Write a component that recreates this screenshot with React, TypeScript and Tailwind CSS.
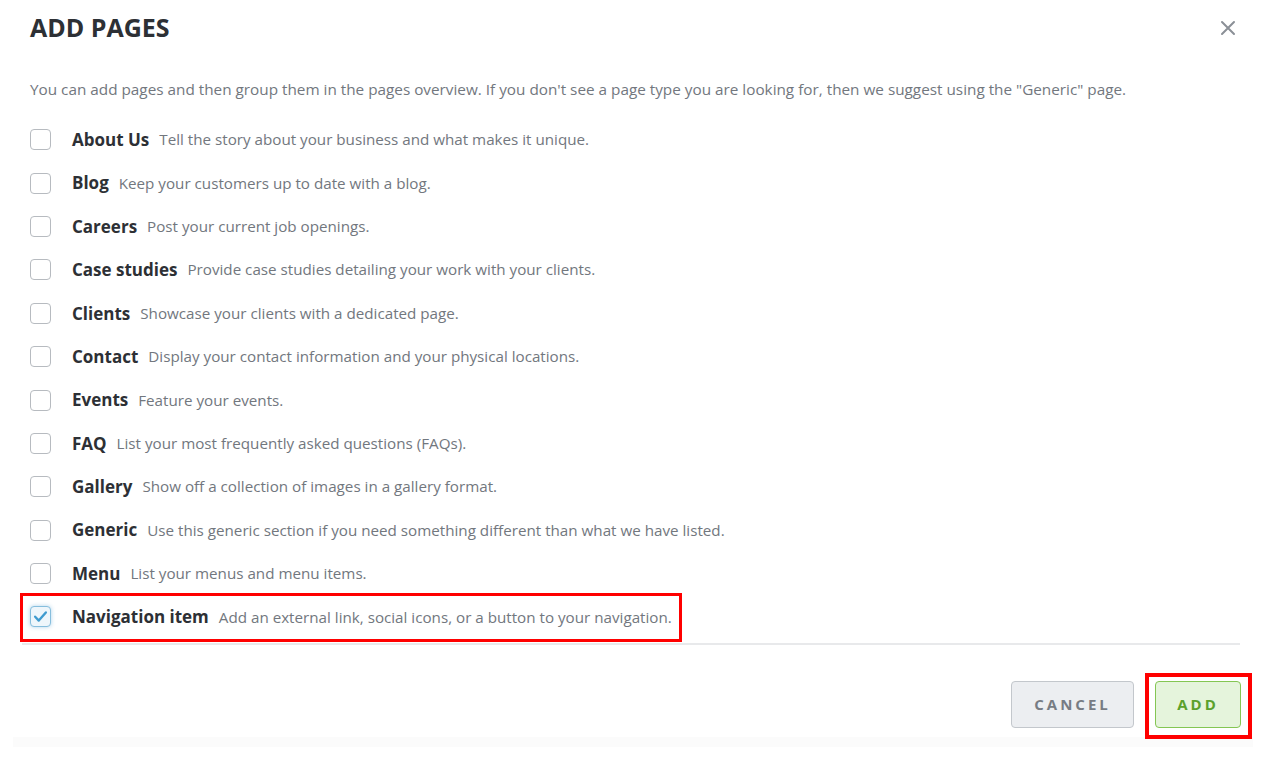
import React from "react";

const items: [string, string][] = [
  ["About Us", "Tell the story about your business and what makes it unique."],
  ["Blog", "Keep your customers up to date with a blog."],
  ["Careers", "Post your current job openings."],
  ["Case studies", "Provide case studies detailing your work with your clients."],
  ["Clients", "Showcase your clients with a dedicated page."],
  ["Contact", "Display your contact information and your physical locations."],
  ["Events", "Feature your events."],
  ["FAQ", "List your most frequently asked questions (FAQs)."],
  ["Gallery", "Show off a collection of images in a gallery format."],
  ["Generic", "Use this generic section if you need something different than what we have listed."],
  ["Menu", "List your menus and menu items."],
  ["Navigation item", "Add an external link, social icons, or a button to your navigation."],
];

export default function App() {
  return (
    <div
      className="relative w-[1288px] h-[760px] bg-white overflow-hidden"
      style={{ fontFamily: "'Open Sans', Lato, sans-serif" }}
    >
      <div className="flex items-center justify-between pl-[30px] pr-[52px] pt-[10px] h-[44px]">
        <h1 className="text-[25px] leading-[32px] font-bold text-[#2d3035]">ADD PAGES</h1>
        <svg width="16" height="16" viewBox="0 0 16 16" className="mt-[2px]">
          <path d="M2 2 L14 14 M14 2 L2 14" stroke="#8b9097" strokeWidth="2" strokeLinecap="round" />
        </svg>
      </div>
      <p className="pl-[30px] mt-[35px] text-[15.3px] leading-[20px] text-[#72777e]">
        You can add pages and then group them in the pages overview. If you don't see a page type you are looking for, then we suggest using the "Generic" page.
      </p>
      <div className="mt-[19px] pl-[30px] flex flex-col">
        {items.map(([label, desc], i) => {
          const checked = i === items.length - 1;
          return (
            <div key={label} className="flex items-center h-[43.4px]">
              {checked ? (
                <div className="w-[21px] h-[21px] rounded-[4px] border-[1.5px] border-[#86bedd] bg-[#eef6fb] shadow-[0_0_4px_rgba(80,160,210,0.45)] flex items-center justify-center">
                  <svg width="15" height="15" viewBox="0 0 14 14">
                    <path d="M2 7.2 L5.4 10.8 L12 3.2" fill="none" stroke="#3f9bcf" strokeWidth="2.2" strokeLinecap="round" strokeLinejoin="round" />
                  </svg>
                </div>
              ) : (
                <div className="w-[21px] h-[21px] rounded-[4px] border-[1.5px] border-[#b7bbc0] bg-white" />
              )}
              <span className="ml-[21px] text-[17px] font-bold text-[#2d3035]">{label}</span>
              <span className="ml-[10px] text-[15.2px] text-[#72777e]">{desc}</span>
            </div>
          );
        })}
      </div>
      <div className="ml-[22px] w-[1218px] h-[2px] bg-[#e8e9eb] mt-[4px]" />
      <div className="flex justify-end gap-[21px] pr-[47px] mt-[36px]">
        <button className="w-[123px] h-[47px] rounded-[4px] border-[1.5px] border-[#c3c7cc] bg-[#eceef1] text-[#777c84] text-[15px] font-bold tracking-[3px]">
          CANCEL
        </button>
        <button className="w-[86px] h-[47px] rounded-[4px] border-[1.5px] border-[#84c653] bg-[#e5f4dc] text-[#5ba12d] text-[15px] font-bold tracking-[3px]">
          ADD
        </button>
      </div>
      <div className="ml-[13px] w-[1240px] h-[10px] bg-[#fbfbfb] mt-[9px]" />

      <div className="absolute left-[20px] top-[593px] w-[662px] h-[49px] border-[3px] border-[#ff0000]" />
      <div className="absolute left-[1145px] top-[673px] w-[107px] h-[66px] border-[4px] border-[#ff0000]" />
    </div>
  );
}
